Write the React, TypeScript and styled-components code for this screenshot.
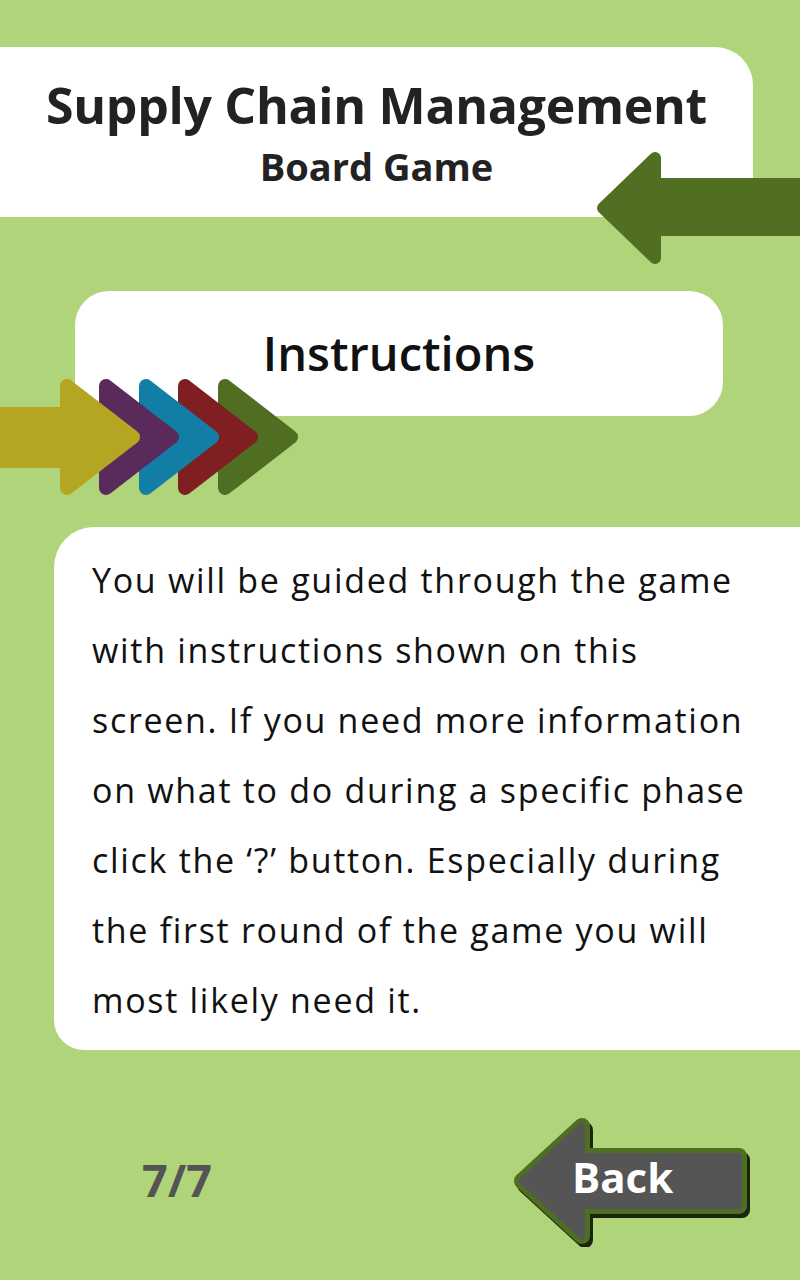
import React from "react";
import styled, { createGlobalStyle } from "styled-components";

const GlobalStyle = createGlobalStyle`
  html, body {
    margin: 0;
    padding: 0;
    background: #afd47a;
  }
  * {
    box-sizing: border-box;
  }
`;

const Page = styled.div`
  position: relative;
  width: 800px;
  height: 1280px;
  overflow: hidden;
  background: #afd47a;
  font-family: "Open Sans", "Liberation Sans", sans-serif;
  display: flex;
  flex-direction: column;
`;

const HeaderCard = styled.header`
  margin-top: 47px;
  width: 753px;
  height: 170px;
  background: #ffffff;
  border-radius: 0 38px 0 0;
  display: flex;
  flex-direction: column;
  align-items: center;
  padding-top: 28px;
`;

const Title = styled.h1`
  margin: 0;
  font-size: 50px;
  line-height: 60px;
  font-weight: 700;
  color: #222222;
  letter-spacing: -0.3px;
`;

const Subtitle = styled.h2`
  margin: 9px 0 0;
  font-size: 38px;
  line-height: 44px;
  font-weight: 700;
  color: #222222;
`;

const HeaderArrow = styled.svg`
  position: absolute;
  left: 597px;
  top: 152px;
`;

const InstructionsCard = styled.div`
  margin: 74px 0 0 75px;
  width: 648px;
  height: 125px;
  background: #ffffff;
  border-radius: 34px;
  display: flex;
  align-items: center;
  justify-content: center;
  padding-bottom: 2px;
`;

const SectionTitle = styled.h3`
  margin: 0;
  font-size: 47px;
  font-weight: 600;
  color: #111111;
`;

const Chevrons = styled.svg`
  position: absolute;
  left: 0;
  top: 375px;
`;

const TextCard = styled.section`
  margin: 111px 0 0 54px;
  height: 523px;
  background: #ffffff;
  border-radius: 40px 0 0 30px;
  padding: 18px 20px 15px 38px;
`;

const Body = styled.p`
  margin: 0;
  font-size: 34px;
  line-height: 70px;
  letter-spacing: 1.7px;
  color: #111111;
  white-space: nowrap;
`;

const Footer = styled.footer`
  margin-top: 65px;
  display: flex;
  align-items: center;
  padding-left: 142px;
`;

const PageCount = styled.span`
  font-size: 45px;
  font-weight: 700;
  color: #545454;
  width: 368px;
  margin-top: -4px;
`;

const BackButton = styled.button`
  position: relative;
  width: 242px;
  height: 132px;
  padding: 0;
  border: none;
  background: none;
  cursor: pointer;
  font-family: inherit;
`;

const BackShape = styled.svg`
  position: absolute;
  left: 0;
  top: 0;
`;

const BackLabel = styled.span`
  position: absolute;
  left: 62px;
  top: 34px;
  font-size: 42px;
  font-weight: 700;
  color: #ffffff;
  line-height: 56px;
`;

const chevronColors = ["#506e22", "#7f1f22", "#127ea5", "#5a2a5a"];
const chevronBacks = [218, 178, 139, 99];

const chevron = (b: number) => `${b + 7},11 ${b + 73},62 ${b + 7},113`;

const backPoints = "229,41 72,41 72,11 12,66 72,121 72,91 229,91";

const lines = [
  "You will be guided through the game",
  "with instructions shown on this",
  "screen. If you need more information",
  "on what to do during a specific phase",
  "click the \u2018?\u2019 button. Especially during",
  "the first round of the game you will",
  "most likely need it.",
];

export default function App() {
  return (
    <Page>
      <GlobalStyle />
      <HeaderCard>
        <Title>Supply Chain Management</Title>
        <Subtitle>Board Game</Subtitle>
      </HeaderCard>
      <HeaderArrow width="210" height="112" viewBox="0 0 210 112">
        <polygon
          points="215,32 58,32 58,6 6,56 58,106 58,78 215,78"
          fill="#516f23"
          stroke="#516f23"
          strokeWidth="12"
          strokeLinejoin="round"
        />
      </HeaderArrow>

      <InstructionsCard>
        <SectionTitle>Instructions</SectionTitle>
      </InstructionsCard>
      <Chevrons width="310" height="125" viewBox="0 0 310 125">
        {chevronBacks.map((b, i) => (
          <polygon
            key={b}
            points={chevron(b)}
            fill={chevronColors[i]}
            stroke={chevronColors[i]}
            strokeWidth="14"
            strokeLinejoin="round"
          />
        ))}
        <rect x="-10" y="32" width="80" height="61" fill="#b4a623" />
        <polygon
          points={chevron(60)}
          fill="#b4a623"
          stroke="#b4a623"
          strokeWidth="14"
          strokeLinejoin="round"
        />
      </Chevrons>

      <TextCard>
        <Body>
          {lines.map((l, i) => (
            <React.Fragment key={i}>
              {l}
              {i < lines.length - 1 && <br />}
            </React.Fragment>
          ))}
        </Body>
      </TextCard>

      <Footer>
        <PageCount>7/7</PageCount>
        <BackButton>
          <BackShape width="242" height="132" viewBox="0 0 242 132">
            <polygon
              points={backPoints}
              transform="translate(3,4)"
              fill="#1c2410"
              stroke="#1c2410"
              strokeWidth="16"
              strokeLinejoin="round"
            />
            <polygon
              points={backPoints}
              fill="#4e6e22"
              stroke="#4e6e22"
              strokeWidth="16"
              strokeLinejoin="round"
            />
            <polygon
              points={backPoints}
              fill="#555555"
              stroke="#555555"
              strokeWidth="6"
              strokeLinejoin="round"
            />
          </BackShape>
          <BackLabel>Back</BackLabel>
        </BackButton>
      </Footer>
    </Page>
  );
}
